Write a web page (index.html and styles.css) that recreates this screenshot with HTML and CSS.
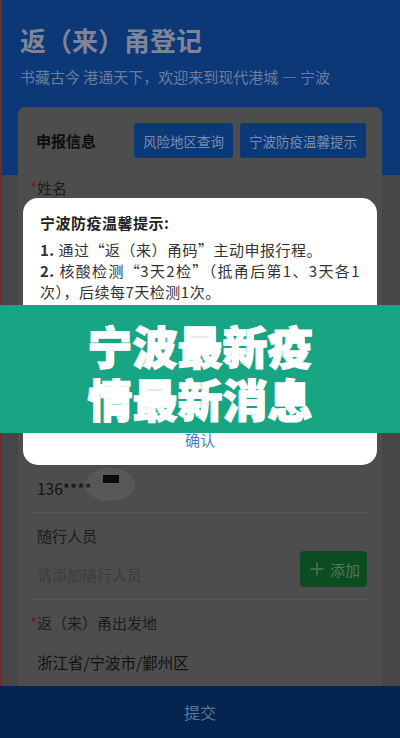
FILE: index.html
```
<!DOCTYPE html>
<html lang="zh-CN">
<head>
    <meta charset="UTF-8">
    <meta name="viewport" content="width=device-width, initial-scale=1.0">
    <title>返（来）甬登记</title>
    <link rel="stylesheet" href="styles.css">
</head>
<body>
    <div class="page">
        <div class="main">
            <div class="header">
                <h1>返（来）甬登记</h1>
                <p class="slogan">书藏古今 港通天下，欢迎来到现代港城 — 宁波</p>
            </div>

            <div class="card">
                <div class="card-head">
                    <h2>申报信息</h2>
                    <div class="head-buttons">
                        <button class="btn-blue">风险地区查询</button>
                        <button class="btn-blue">宁波防疫温馨提示</button>
                    </div>
                </div>

                <!-- rows under the dialog are left blank -->
                <div class="field">
                    <div class="field-label"><span class="req">*</span>姓名</div>
                    <div class="field-value"></div>
                </div>
                <div class="field">
                    <div class="field-label"></div>
                    <div class="field-value"></div>
                </div>
                <div class="field">
                    <div class="field-label"></div>
                    <div class="field-value"></div>
                </div>
                <div class="field">
                    <div class="field-label"></div>
                    <div class="field-value phone"><span class="phone-num">136****</span><span class="touch"><span class="mask"></span></span></div>
                </div>
                <div class="field">
                    <div class="field-label plain">随行人员</div>
                    <div class="companion-row">
                        <span class="placeholder">请添加随行人员</span>
                        <button class="btn-green">
                            <svg width="14" height="14" viewBox="0 0 14 14"><path d="M7 0.5v13M0.5 7h13" stroke="currentColor" stroke-width="1.4" fill="none"/></svg>
                            添加
                        </button>
                    </div>
                </div>
                <div class="field last">
                    <div class="field-label"><span class="req">*</span>返（来）甬出发地</div>
                    <div class="field-value">浙江省/宁波市/鄞州区</div>
                </div>
            </div>
        </div>

        <div class="submit-bar">提交</div>

        <div class="dialog">
            <div class="dialog-body">
                <h3>宁波防疫温馨提示:</h3>
                <p><b>1.</b> 通过“返（来）甬码”主动申报行程。</p>
                <p><b>2.</b> 核酸检测“3天2检”（抵甬后第1、3天各1次），后续每7天检测1次。</p>
            </div>
            <div class="dialog-foot">确认</div>
        </div>

        <div class="banner">宁波最新疫<br>情最新消息</div>
    </div>
</body>
</html>
```

FILE: styles.css
```
* {
    box-sizing: border-box;
}

body {
    margin: 0;
    font-family: "Noto Sans CJK SC", "Noto Sans", sans-serif;
    background: #464646;
}

.page {
    position: relative;
    width: 400px;
    height: 738px;
    overflow: hidden;
    display: flex;
    flex-direction: column;
    background: linear-gradient(#0d3877 175px, #464646 175px);
    box-shadow: inset 2px 0 #6a2c2c;
}

.main {
    flex: 1;
    overflow: hidden;
}

/* header */
.header {
    padding: 23px 20px 0;
}

.header h1 {
    margin: 0;
    font-size: 26px;
    line-height: 34px;
    font-weight: bold;
    color: #7d8596;
}

.slogan {
    margin: 10px 0 0;
    font-size: 15px;
    line-height: 20px;
    color: #6b7d9c;
}

/* card */
.card {
    margin: 20px 18px 0;
    background: #4d4d4d;
    border-radius: 7px;
    height: 600px;
}

.card-head {
    display: flex;
    align-items: center;
    padding: 16px 16px 0 18px;
}

.card-head h2 {
    margin: 0;
    font-size: 15px;
    font-weight: bold;
    color: #0d0d0d;
}

.head-buttons {
    margin-left: auto;
    display: flex;
    gap: 7px;
}

.btn-blue {
    height: 35px;
    padding: 0 9px;
    border: none;
    border-radius: 3px;
    background: #0b3977;
    color: #7b8cab;
    font-family: inherit;
    font-size: 13.5px;
}

.field {
    margin: 0 15px;
    padding: 11px 0 12px;
    border-bottom: 1px solid #575757;
}

.card-head + .field {
    margin-top: 7px;
}

.field.last {
    border-bottom: none;
    padding-bottom: 9px;
}

.field-label {
    height: 24px;
    line-height: 24px;
    font-size: 15px;
    color: #1c1c1c;
    margin-left: -3px;
}

.field-label.plain {
    margin-left: 4px;
}

.req {
    display: inline-block;
    width: 7px;
    color: #6e1a1a;
}

.field-value {
    margin-top: 15px;
    margin-left: 4px;
    height: 24px;
    line-height: 24px;
    font-size: 15.5px;
    color: #121212;
}

.phone {
    position: relative;
}

.phone-num {
    position: relative;
    z-index: 1;
}

.touch {
    position: absolute;
    left: 48px;
    top: -8px;
    width: 50px;
    height: 33px;
    border-radius: 50%;
    background: #585858;
}

.mask {
    position: absolute;
    left: 18px;
    top: 7px;
    width: 16px;
    height: 8px;
    background: #0a0a0a;
}

.companion-row {
    display: flex;
    align-items: center;
    justify-content: space-between;
    margin-top: 3px;
    margin-left: 4px;
}

.placeholder {
    padding-top: 10px;
    font-size: 15px;
    color: #3c3c3c;
}

.btn-green {
    display: flex;
    align-items: center;
    gap: 6px;
    height: 36px;
    width: 67px;
    padding: 0 0 0 10px;
    border: none;
    border-radius: 4px;
    background: #0b4d21;
    color: #4f7a5c;
    font-family: inherit;
    font-size: 15px;
}

/* bottom bar */
.submit-bar {
    height: 52px;
    line-height: 52px;
    text-align: center;
    background: #052450;
    color: #5f7594;
    font-size: 16px;
}

/* dialog over the dimmed page */
.dialog {
    position: absolute;
    top: 198px;
    left: 23px;
    width: 354px;
    height: 267px;
    background: #fff;
    border-radius: 15px;
    display: flex;
    flex-direction: column;
}

.dialog-body {
    flex: 1;
    padding: 14px 17px 0;
    color: #333;
    font-size: 15px;
    letter-spacing: 0.5px;
}

.dialog-body h3 {
    margin: 0;
    font-size: 15px;
    line-height: 22px;
    font-weight: bold;
    color: #222;
}

.dialog-body p {
    margin: 5px 0 0;
    line-height: 21px;
    text-align: justify;
}

.dialog-body p + p {
    margin-top: 0;
}

.dialog-foot {
    height: 52px;
    line-height: 52px;
    border-top: 1px solid #eee;
    text-align: center;
    color: #4a7fc4;
    font-size: 15px;
}

.banner {
    position: absolute;
    top: 305px;
    left: 0;
    width: 400px;
    height: 128px;
    padding-top: 14px;
    background: #17a584;
    color: #fff;
    text-align: center;
    font-size: 45px;
    line-height: 53px;
    font-weight: 900;
    -webkit-text-stroke: 1.3px #fff;
}
```
